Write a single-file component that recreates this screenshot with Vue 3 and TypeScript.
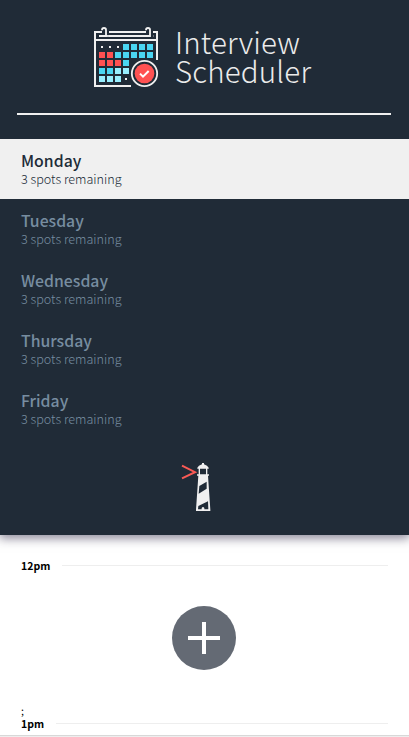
<script setup lang="ts">
import { ref } from 'vue'

interface Day {
  name: string
  spots: number
}

const days: Day[] = ['Monday', 'Tuesday', 'Wednesday', 'Thursday', 'Friday'].map((name) => ({ name, spots: 3 }))
const selected = ref<string>('Monday')

const palette: Record<string, string> = { r: '#ff5152', b: '#4ad6f2', l: '#98efff' }
const rows: string[] = ['...bbbb', 'rrbbbbb', 'rrrb', 'bbll', 'lll']
const cells = rows.flatMap((row, y) =>
  [...row].map((key, x) => ({ key, x, y })).filter((cell) => cell.key !== '.'),
)
</script>

<template>
  <main class="layout">
    <section class="sidebar">
      <header class="brand">
        <svg class="calendar" viewBox="27 18 195 186" width="65" height="62">
          <g fill="none" stroke="#f0f0f0" stroke-width="6">
            <path d="M138 198H30V36H51M72 36H183M204 36H216V120M30 60H216" />
            <path d="M42 48H63V29Q63 24 57 24Q51 24 51 31M72 48H195V29Q195 24 189 24Q183 24 183 31M204 48H205" stroke-width="5.5" />
            <path d="M61 48H74" stroke-width="5.5" />
          </g>
          <rect
            v-for="cell in cells"
            :key="`${cell.x}-${cell.y}`"
            :x="42 + cell.x * 24"
            :y="72 + cell.y * 24"
            width="18"
            height="18"
            :fill="palette[cell.key]"
          />
          <path d="M48 78h6v6h-6zM72 78h6v6h-6zM96 78h6v6h-6zM120 174h6v6h-6z" fill="#f0f0f0" />
          <circle cx="178.5" cy="160.5" r="38" fill="#202b37" stroke="#f0f0f0" stroke-width="5.5" />
          <circle cx="178.5" cy="160.5" r="29.5" fill="#ff5152" />
          <path d="M165 161l9 9 17-17" fill="none" stroke="#fff" stroke-width="6" />
        </svg>
        <svg class="title" viewBox="0 0 142 64" width="142" height="64">
          <text x="0" y="28" textLength="125">Interview</text>
          <text x="0" y="57" textLength="136">Scheduler</text>
        </svg>
      </header>
      <hr class="divider" />
      <ul class="days">
        <li
          v-for="day in days"
          :key="day.name"
          class="day"
          :class="{ selected: day.name === selected }"
          @click="selected = day.name"
        >
          <h2>{{ day.name }}</h2>
          <p>{{ day.spots }} spots remaining</p>
        </li>
      </ul>
      <svg class="lighthouse" viewBox="34 36 90 150" width="30" height="50">
        <path d="M37 47L76 66.500L37 85" fill="none" stroke="#fa5a55" stroke-width="6" />
        <path fill="#f0f0f0" fill-rule="evenodd" d="M83 53Q86 47 97 43V39h6v4Q114 47 117 53V56H113V73H118V77H115L122 179V183H79V179L86 77H82V73H87V56H83ZM91 56V73H109V56ZM111 95L89 108L87 131L111 116ZM115 154L86 168L85 178H96V174Q100 168 104 174V178H116Z" />
      </svg>
    </section>
    <section class="schedule">
      <div class="hour"><h4>12pm</h4><hr /></div>
      <div class="empty">
        <button class="add" aria-label="Add">
          <svg viewBox="0 0 32 32" width="32" height="32">
            <path d="M16 0V32M0 16H32" stroke="#fff" stroke-width="4" />
          </svg>
        </button>
      </div>
      <div class="stray">;</div>
      <div class="hour"><h4>1pm</h4><hr /></div>
      <div class="edge"></div>
    </section>
  </main>
</template>

<style>
body {
  margin: 0;
  background: #fff;
  overflow: hidden;
}
</style>

<style scoped>
* {
  box-sizing: border-box;
}
h2, h4, p, ul, hr {
  margin: 0;
  padding: 0;
}
.layout {
  height: 737px;
  overflow: hidden;
  font-family: "Noto Sans CJK JP", "Noto Sans", sans-serif;
}
.sidebar {
  height: 535px;
  display: flex;
  flex-direction: column;
  align-items: center;
  background: #202b37;
  box-shadow: 0 2px 10px 1px rgba(34, 28, 60, .55);
}
.brand {
  height: 113px;
  width: 100%;
  padding: 26px 0 0 94px;
  display: flex;
  align-items: flex-start;
}
.calendar {
  flex: none;
}
.title {
  flex: none;
  margin-left: 16px;
  overflow: visible;
  font-size: 29.500px;
  font-weight: 300;
  fill: #ebebeb;
}
.divider {
  width: 374px;
  height: 2px;
  margin-right: 1px;
  border: 0;
  background: #f0f0f0;
}
.days {
  width: 100%;
  margin-top: 24px;
  list-style: none;
}
.day {
  height: 60px;
  padding: 12px 21px 0;
  color: #778da0;
  cursor: pointer;
}
.day h2 {
  font-size: 15.800px;
  line-height: 20px;
  font-weight: 500;
}
.day p {
  font-size: 12.600px;
  line-height: 15px;
  font-weight: 300;
}
.day.selected {
  background: #f0f0f0;
  color: #202b37;
}
.lighthouse {
  margin: 23px 0 0 -17px;
}
.schedule {
  padding: 23px 21px 0;
}
.hour {
  height: 14px;
  display: flex;
  align-items: center;
  gap: 11.500px;
}
.hour h4 {
  padding-top: 2px;
  font-size: 10.500px;
  line-height: 14px;
  font-weight: 700;
}
.hour hr {
  flex: 1;
  height: 1px;
  border: 0;
  background: #eee;
}
.empty {
  height: 132px;
  padding-top: 34px;
  display: flex;
  justify-content: center;
  align-items: flex-start;
}
.add {
  width: 64px;
  height: 64px;
  margin-right: 1px;
  padding: 0;
  border: 0;
  border-radius: 50%;
  background: #646a74;
  display: flex;
  align-items: center;
  justify-content: center;
}
.stray {
  height: 12px;
  font-size: 10.600px;
  line-height: 14px;
}
.edge {
  height: 2px;
  margin: 5px -21px 0;
  background: #eee;
  border-top: 1px solid #d8d8d8;
}
</style>
